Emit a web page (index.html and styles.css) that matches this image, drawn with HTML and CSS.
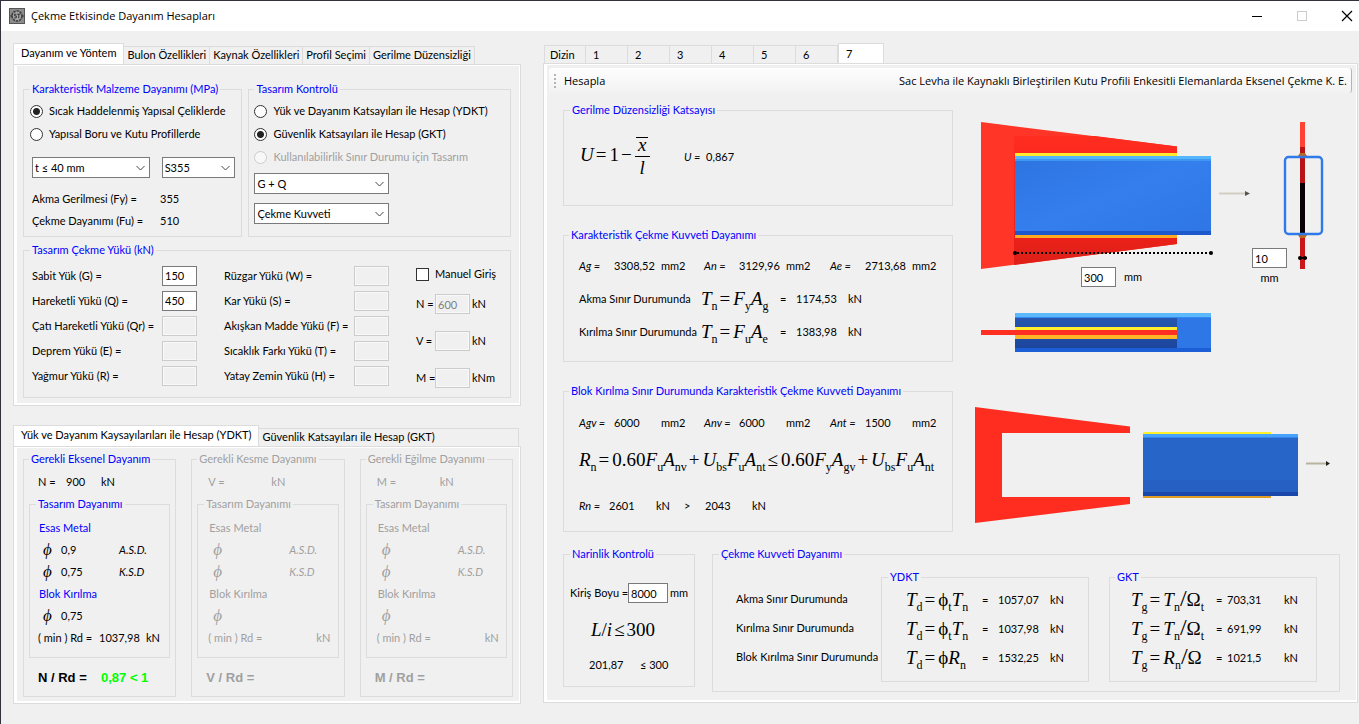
FILE: index.html
```
<!DOCTYPE html>
<html lang="tr">
<head>
<meta charset="utf-8">
<title>Çekme Etkisinde Dayanım Hesapları</title>
<link rel="stylesheet" href="styles.css">
</head>
<body>
<div class="window">
  <header class="titlebar">
    <svg class="app-icon" width="16" height="16" viewBox="0 0 16 16" aria-hidden="true">
      <rect x="0.5" y="0.5" width="15" height="15" fill="#8c8c8c" stroke="#555"/>
      <circle cx="8" cy="8" r="5" fill="#a9a9a9" stroke="#3f3f3f" stroke-width="1.6" stroke-dasharray="2.4 .8"/>
      <path d="M1.5 8h2M12.5 8h2" stroke="#444" stroke-width="2"/>
      <path d="M7.4 6.2H5.6v1.7h1.7v2H5.2M8.2 6.2h3.2M9.8 6.2v4" fill="none" stroke="#333"/>
    </svg>
    <h1 class="title">Çekme Etkisinde Dayanım Hesapları</h1>
    <div class="window-buttons">
      <button class="win-btn" aria-label="Simge durumuna küçült"><svg width="12" height="12" viewBox="0 0 12 12"><path d="M1 6.5h10" stroke="#000"/></svg></button>
      <button class="win-btn" aria-label="Ekranı kapla" disabled><svg width="12" height="12" viewBox="0 0 12 12"><rect x="1.5" y="1.5" width="9" height="9" fill="none" stroke="#ccc"/></svg></button>
      <button class="win-btn" aria-label="Kapat"><svg width="12" height="12" viewBox="0 0 12 12"><path d="M1 1l10 10M11 1L1 11" stroke="#000" stroke-width="1.2"/></svg></button>
    </div>
  </header>

  <main class="workspace">
    <div class="side">
      <section>
        <div class="tabs" role="tablist">
          <button class="tab active" role="tab" aria-selected="true">Dayanım ve Yöntem</button>
          <button class="tab" role="tab">Bulon Özellikleri</button>
          <button class="tab" role="tab">Kaynak Özellikleri</button>
          <button class="tab" role="tab">Profil Seçimi</button>
          <button class="tab" role="tab">Gerilme Düzensizliği</button>
        </div>
        <div class="panel method-panel">
          <fieldset class="group material">
            <legend>Karakteristik Malzeme Dayanımı (MPa)</legend>
            <label class="choice"><input type="radio" name="mat" checked>Sıcak Haddelenmiş Yapısal Çeliklerde</label>
            <label class="choice"><input type="radio" name="mat">Yapısal Boru ve Kutu Profillerde</label>
            <div class="selects">
              <select aria-label="Kalınlık"><option>t ≤ 40 mm</option></select>
              <select aria-label="Çelik sınıfı"><option>S355</option></select>
            </div>
            <div class="pair"><span>Akma Gerilmesi (Fy) =</span><output>355</output></div>
            <div class="pair"><span>Çekme Dayanımı (Fu) =</span><output>510</output></div>
          </fieldset>
          <fieldset class="group control">
            <legend>Tasarım Kontrolü</legend>
            <label class="choice"><input type="radio" name="ctl">Yük ve Dayanım Katsayıları ile Hesap (YDKT)</label>
            <label class="choice"><input type="radio" name="ctl" checked>Güvenlik Katsayıları ile Hesap (GKT)</label>
            <label class="choice off"><input type="radio" name="ctl" disabled>Kullanılabilirlik Sınır Durumu için Tasarım</label>
            <select aria-label="Yük birleşimi"><option>G + Q</option></select>
            <select aria-label="Kuvvet türü"><option>Çekme Kuvveti</option></select>
          </fieldset>
          <fieldset class="group loads">
            <legend>Tasarım Çekme Yükü (kN)</legend>
            <div class="load-list">
              <label for="g">Sabit Yük (G) =</label><input id="g" value="150">
              <label for="q">Hareketli Yükü (Q) =</label><input id="q" value="450">
              <label for="qr">Çatı Hareketli Yükü (Qr) =</label><input id="qr" disabled>
              <label for="e">Deprem Yükü (E) =</label><input id="e" disabled>
              <label for="r">Yağmur Yükü (R) =</label><input id="r" disabled>
            </div>
            <div class="load-list">
              <label for="w">Rüzgar Yükü (W) =</label><input id="w" disabled>
              <label for="s">Kar Yükü (S) =</label><input id="s" disabled>
              <label for="f">Akışkan Madde Yükü (F) =</label><input id="f" disabled>
              <label for="t">Sıcaklık Farkı Yükü (T) =</label><input id="t" disabled>
              <label for="h">Yatay Zemin Yükü (H) =</label><input id="h" disabled>
            </div>
            <div class="manual">
              <label class="check"><input type="checkbox">Manuel Giriş</label>
              <div class="force"><label for="n">N =</label><input id="n" value="600" disabled><span>kN</span></div>
              <div class="force"><label for="v">V =</label><input id="v" disabled><span>kN</span></div>
              <div class="force"><label for="m">M =</label><input id="m" disabled><span>kNm</span></div>
            </div>
          </fieldset>
        </div>
      </section>

      <section>
        <div class="tabs" role="tablist">
          <button class="tab active" role="tab" aria-selected="true">Yük ve Dayanım Kaysayılarıları ile Hesap (YDKT)</button>
          <button class="tab grow" role="tab">Güvenlik Katsayıları ile Hesap (GKT)</button>
        </div>
        <div class="panel strength-panel">
          <fieldset class="group strength">
            <legend>Gerekli Eksenel Dayanım</legend>
            <div class="need"><span>N =</span><output>900</output><span>kN</span></div>
            <fieldset class="group design">
              <legend>Tasarım Dayanımı</legend>
              <h2 class="sub-title">Esas Metal</h2>
              <div class="phi-row"><i class="phi">ϕ</i><span>0,9</span><i>A.S.D.</i></div>
              <div class="phi-row"><i class="phi">ϕ</i><span>0,75</span><i>K.S.D</i></div>
              <h2 class="sub-title">Blok Kırılma</h2>
              <div class="phi-row"><i class="phi">ϕ</i><span>0,75</span></div>
              <div class="min-row"><span>( min ) Rd =</span><output>1037,98</output><span>kN</span></div>
            </fieldset>
            <div class="ratio"><span>N / Rd =</span><output>0,87 &lt; 1</output></div>
          </fieldset>
          <fieldset class="group strength off" disabled>
            <legend>Gerekli Kesme Dayanımı</legend>
            <div class="need"><span>V =</span><output></output><span>kN</span></div>
            <fieldset class="group design">
              <legend>Tasarım Dayanımı</legend>
              <h2 class="sub-title">Esas Metal</h2>
              <div class="phi-row"><i class="phi">ϕ</i><span></span><i>A.S.D.</i></div>
              <div class="phi-row"><i class="phi">ϕ</i><span></span><i>K.S.D</i></div>
              <h2 class="sub-title">Blok Kırılma</h2>
              <div class="phi-row"><i class="phi">ϕ</i></div>
              <div class="min-row"><span>( min ) Rd =</span><output></output><span>kN</span></div>
            </fieldset>
            <div class="ratio"><span>V / Rd =</span></div>
          </fieldset>
          <fieldset class="group strength off" disabled>
            <legend>Gerekli Eğilme Dayanımı</legend>
            <div class="need"><span>M =</span><output></output><span>kN</span></div>
            <fieldset class="group design">
              <legend>Tasarım Dayanımı</legend>
              <h2 class="sub-title">Esas Metal</h2>
              <div class="phi-row"><i class="phi">ϕ</i><span></span><i>A.S.D.</i></div>
              <div class="phi-row"><i class="phi">ϕ</i><span></span><i>K.S.D</i></div>
              <h2 class="sub-title">Blok Kırılma</h2>
              <div class="phi-row"><i class="phi">ϕ</i></div>
              <div class="min-row"><span>( min ) Rd =</span><output></output><span>kN</span></div>
            </fieldset>
            <div class="ratio"><span>M / Rd =</span></div>
          </fieldset>
        </div>
      </section>
    </div>

    <section class="results">
      <div class="tabs page-tabs" role="tablist">
        <button class="tab" role="tab">Dizin</button>
        <button class="tab" role="tab">1</button>
        <button class="tab" role="tab">2</button>
        <button class="tab" role="tab">3</button>
        <button class="tab" role="tab">4</button>
        <button class="tab" role="tab">5</button>
        <button class="tab" role="tab">6</button>
        <button class="tab active" role="tab" aria-selected="true">7</button>
      </div>
      <div class="panel results-panel">
        <div class="toolbar">
          <span class="grip"></span>
          <button class="tool">Hesapla</button>
          <span class="caption">Sac Levha ile Kaynaklı Birleştirilen Kutu Profili Enkesitli Elemanlarda Eksenel Çekme K. E.</span>
        </div>
        <div class="sheet">
          <div class="checks">
            <fieldset class="group irregularity">
              <legend>Gerilme Düzensizliği Katsayısı</legend>
              <div class="math"><i>U</i><span class="op">=</span>1<span class="op">−</span><span class="frac"><i><span class="bar">x</span></i><i class="den">l</i></span></div>
              <div class="u-value"><i>U =</i><output>0,867</output></div>
            </fieldset>
            <fieldset class="group characteristic">
              <legend>Karakteristik Çekme Kuvveti Dayanımı</legend>
              <div class="areas"><i>Ag =</i><output>3308,52</output><span>mm2</span><i>An =</i><output>3129,96</output><span>mm2</span><i>Ae =</i><output>2713,68</output><span>mm2</span></div>
              <div class="state"><span>Akma Sınır Durumunda</span><span class="math"><i>T</i><sub>n</sub><span class="op">=</span><i>F</i><sub>y</sub><i>A</i><sub>g</sub></span><span>=</span><output>1174,53</output><span>kN</span></div>
              <div class="state"><span>Kırılma Sınır Durumunda</span><span class="math"><i>T</i><sub>n</sub><span class="op">=</span><i>F</i><sub>u</sub><i>A</i><sub>e</sub></span><span>=</span><output>1383,98</output><span>kN</span></div>
            </fieldset>
            <fieldset class="group block">
              <legend>Blok Kırılma Sınır Durumunda Karakteristik Çekme Kuvveti Dayanımı</legend>
              <div class="areas"><i>Agv =</i><output>6000</output><span>mm2</span><i>Anv =</i><output>6000</output><span>mm2</span><i>Ant =</i><output>1500</output><span>mm2</span></div>
              <div class="math"><i>R</i><sub>n</sub><span class="op">=</span>0.60<i>F</i><sub>u</sub><i>A</i><sub>nv</sub><span class="op">+</span><i>U</i><sub>bs</sub><i>F</i><sub>u</sub><i>A</i><sub>nt</sub><span class="op">≤</span>0.60<i>F</i><sub>y</sub><i>A</i><sub>gv</sub><span class="op">+</span><i>U</i><sub>bs</sub><i>F</i><sub>u</sub><i>A</i><sub>nt</sub></div>
              <div class="compare"><i>Rn =</i><output>2601</output><span>kN</span><span>&gt;</span><output>2043</output><span>kN</span></div>
            </fieldset>
          </div>

          <div class="drawings">
            <div class="section-view">
              <svg width="350" height="232" viewBox="975 121 350 232" role="img" aria-label="Birleşim görünüşleri">
                <defs>
                  <linearGradient id="plate" x1="0" x2="0" y1="0" y2="1"><stop offset="0" stop-color="#ff2c20"/><stop offset=".7" stop-color="#f02218"/><stop offset="1" stop-color="#dd1f18"/></linearGradient>
                  <linearGradient id="tube" x1="0" x2="1" y1="0" y2="1"><stop offset="0" stop-color="#2d74e0"/><stop offset=".5" stop-color="#347eee"/><stop offset="1" stop-color="#2e76e4"/></linearGradient>
                  <linearGradient id="under" x1="0" x2="0" y1="0" y2="1"><stop offset="0" stop-color="#2656ae"/><stop offset="1" stop-color="#1c459c"/></linearGradient>
                </defs>
                <path d="M981 122L1177 146.500V244L981 269z" fill="#ff3527"/>
                <path d="M1014 136V265L1177 244V146.500L1095 136z" fill="url(#plate)"/>
                <path d="M1015 153h162v4h-162z" fill="#ffea2e"/>
                <path d="M1015 234h162v4h-162z" fill="#ffaa20"/>
                <path d="M1015 156h196v79h-196z" fill="url(#tube)"/>
                <path d="M1015 156h196v3h-196z" fill="#55b6fb"/><path d="M1015 159h196v2h-196z" fill="#3f97f4"/>
                <path d="M1015 231h196v4h-196z" fill="#1c57cc"/>
                <path d="M1017 253h194" stroke="#000" stroke-width="2" stroke-dasharray="2 2"/>
                <circle cx="1015" cy="253" r="2"/><circle cx="1211" cy="253" r="2"/>
                <path d="M1219 193.500h27" stroke="#d0cec2" stroke-width="2"/><path d="M1245 191l5 2.500-5 2.500z" fill="#555"/>

                <path d="M1015 313h196v39h-196z" fill="#2d78e6"/>
                <path d="M1015 313h196v4h-196z" fill="#5bb8fb"/><path d="M1015 317h196v1h-196z" fill="#3389f0"/>
                <path d="M1015 318h162v30h-162z" fill="url(#under)"/>
                <path d="M1015 348h196v4h-196z" fill="#1c5ed6"/>
                <path d="M1015 327h162v4h-162z" fill="#ffed2e"/><path d="M1015 335h162v4h-162z" fill="#ffb426"/>
                <path d="M981 330h196v5h-196z" fill="#ff2f22"/>

                <path d="M1300 122h5v25h-5z" fill="#ff4234"/><path d="M1300 147h5v36h-5z" fill="#b81418"/>
                <path d="M1300 183h5v50h-5z" fill="#080006"/><path d="M1300 233h5v36h-5z" fill="#c9171a"/>
                <path d="M1298 156l2-3h5l2 3zM1298 235l2 3h5l2-3z" fill="#b66a22"/>
                <rect x="1285" y="157" width="37" height="77" rx="3.500" fill="none" stroke="#2f7ae8" stroke-width="2.400"/>
                <path d="M1299 258h8" stroke="#000" stroke-width="2"/><circle cx="1300" cy="258" r="2"/><circle cx="1305" cy="258" r="2"/>
              </svg>
              <label class="dim dim-length"><input value="300">mm</label>
              <label class="dim dim-thickness"><input value="10">mm</label>
            </div>
            <svg width="356" height="118" viewBox="975 406 356 118" role="img" aria-label="Blok kırılma görünüşü">
              <path d="M975 407L1130 426.500V433H1002V497H1130V504L975 523z" fill="#ff2c20"/>
              <path d="M1143 432h128v4h-128z" fill="#fff028"/><path d="M1143 494h128v4h-128z" fill="#e29c24"/>
              <path d="M1143 434h155v62h-155z" fill="#2865c8"/>
              <path d="M1143 434h155v3h-155z" fill="#46a2fa"/><path d="M1143 437h155v1h-155z" fill="#3484ea"/>
              <path d="M1143 480h155v12h-155z" fill="#2560c2"/><path d="M1143 492h155v4h-155z" fill="#1a48aa"/>
              <path d="M1306 463.500h22" stroke="#b8b29e" stroke-width="2"/><path d="M1326 461l4 2.500-4 2.500z" fill="#222"/>
            </svg>
          </div>

          <fieldset class="group slender">
            <legend>Narinlik Kontrolü</legend>
            <div class="length"><label for="len">Kiriş Boyu =</label><input id="len" value="8000"><span>mm</span></div>
            <div class="math"><i>L</i>/<i>i</i><span class="tight">≤</span>300</div>
            <div class="limit"><output>201,87</output><span>≤ 300</span></div>
          </fieldset>

          <fieldset class="group capacity">
            <legend>Çekme Kuvveti Dayanımı</legend>
            <div class="state-names"><span>Akma Sınır Durumunda</span><span>Kırılma Sınır Durumunda</span><span>Blok Kırılma Sınır Durumunda</span></div>
            <fieldset class="group ydkt">
              <legend>YDKT</legend>
              <div class="cap-row"><span class="math"><i>T</i><sub>d</sub><span class="op">=</span>ϕ<sub>t</sub><i>T</i><sub>n</sub></span><span>=</span><output>1057,07</output><span>kN</span></div>
              <div class="cap-row"><span class="math"><i>T</i><sub>d</sub><span class="op">=</span>ϕ<sub>t</sub><i>T</i><sub>n</sub></span><span>=</span><output>1037,98</output><span>kN</span></div>
              <div class="cap-row"><span class="math"><i>T</i><sub>d</sub><span class="op">=</span>ϕ<i>R</i><sub>n</sub></span><span>=</span><output>1532,25</output><span>kN</span></div>
            </fieldset>
            <fieldset class="group gkt">
              <legend>GKT</legend>
              <div class="cap-row"><span class="math"><i>T</i><sub>g</sub><span class="op">=</span><i>T</i><sub>n</sub><span class="slash">/</span>Ω<sub>t</sub></span><span>=</span><output>703,31</output><span>kN</span></div>
              <div class="cap-row"><span class="math"><i>T</i><sub>g</sub><span class="op">=</span><i>T</i><sub>n</sub><span class="slash">/</span>Ω<sub>t</sub></span><span>=</span><output>691,99</output><span>kN</span></div>
              <div class="cap-row"><span class="math"><i>T</i><sub>g</sub><span class="op">=</span><i>R</i><sub>n</sub><span class="slash">/</span>Ω</span><span>=</span><output>1021,5</output><span>kN</span></div>
            </fieldset>
          </fieldset>
        </div>
      </div>
    </section>
  </main>
</div>
</body>
</html>
```
FILE: styles.css
```
* { box-sizing: border-box; }

body {
  margin: 0;
  background: #f0f0f0;
  color: #000;
  font: 11px/16px Lato, sans-serif;
}

button, input, select { font: inherit; color: inherit; margin: 0; }

.window {
  min-height: 100vh;
  border: 1px solid #33313e;
  border-right: 0;
}

/* Title bar */
.titlebar {
  display: flex;
  align-items: center;
  height: 30px;
  padding-left: 8px;
  background: #fff;
}
.title {
  flex: 1;
  margin: 0 0 0 6px;
  font: 11px/16px "Open Sans", sans-serif;
}
.window-buttons { display: flex; }
.win-btn {
  display: grid;
  place-items: center;
  width: 45px;
  height: 30px;
  padding: 0;
  border: 0;
  background: none;
}
.win-btn:last-child { width: 24px; margin-left: 11px; }

/* Two-column workspace */
.workspace {
  display: grid;
  grid-template-columns: minmax(508px, 508fr) minmax(815px, 815fr);
  gap: 22px;
  align-items: start;
  padding: 12px 1px 20px 12px;
}
.side { display: grid; gap: 19px; }

/* Tabs */
.tabs { display: flex; align-items: flex-end; height: 21px; }
.tab {
  height: 18px;
  padding: 0 3px 2px;
  border: 1px solid #dcdcdc;
  border-bottom: 0;
  border-left: 0;
  background: #f0f0f0;
  line-height: 14px;
  white-space: nowrap;
  text-align: left;
}
.tab.active {
  height: 21px;
  padding: 0 7px 2px;
  border-left: 1px solid #dcdcdc;
  background: #fff;
}
.tab.grow { flex: 1; margin-right: 2px; }
.page-tabs { padding-left: 1px; height: 20px; }
.page-tabs .tab { width: 42px; padding: 0 0 0 7px; }
.page-tabs .tab:first-child { border-left: 1px solid #dcdcdc; padding-left: 5px; }
.page-tabs .tab.active { width: 46px; height: 20px; }

.panel {
  border: 1px solid #dcdcdc;
  box-shadow: inset 3px 1px #fff, inset -1px -2px #fff;
}

/* Group boxes */
.group {
  min-width: 0;
  margin: 0;
  padding: 0;
  border: 1px solid #dcdcdc;
}
.group > legend {
  margin-left: 6px;
  padding: 0 2px;
  color: #00f;
  line-height: 16px;
  white-space: nowrap;
}
.off, .off .sub-title { color: #a0a0a0; }
.group.off > legend, .off .group > legend { color: #a0a0a0; }

input:not([type]) {
  width: 35px;
  height: 20px;
  padding: 0 2px;
  border: 1px solid #7a7a7a;
  background: #fff;
  border-radius: 0;
}
input:not([type]):disabled {
  border-color: #ccc;
  background: #f0f0f0;
  color: #808080;
  box-shadow: inset 0 0 0 1px #f8f8f8;
}

select {
  appearance: none;
  height: 21px;
  padding: 0 2px;
  border: 1px solid #7a7a7a;
  border-radius: 0;
  background: #fff url("data:image/svg+xml,%3Csvg xmlns='http://www.w3.org/2000/svg' width='9' height='6'%3E%3Cpath d='M.5 1l4 4 4-4' fill='none' stroke='%23444'/%3E%3C/svg%3E") no-repeat right 4px center;
}

input[type="radio"] {
  appearance: none;
  flex: none;
  width: 13px;
  height: 13px;
  border: 1px solid #333;
  border-radius: 50%;
  background: #fff;
}
input[type="radio"]:checked { background: radial-gradient(circle, #222 3px, #fff 4px); }
input[type="radio"]:disabled { border-color: #ccc; background: #f8f8f8; }
input[type="checkbox"] {
  appearance: none;
  flex: none;
  width: 13px;
  height: 13px;
  border: 1px solid #333;
  background: #fff;
}
.choice, .check { display: flex; align-items: center; gap: 6px; white-space: nowrap; }
.choice { height: 22px; margin-bottom: 1px; }

/* Method panel */
.method-panel {
  display: grid;
  grid-template-columns: minmax(0, 219fr) minmax(0, 262fr);
  gap: 5px 6px;
  padding: 16px 9px 7px;
}
.material { padding: 3px 6px 4px; }
.material legend, .control legend { margin-left: 0; }
.selects { display: flex; gap: 12px; margin: 12px 0 10px 2px; }
.selects select:first-child { width: 118px; }
.selects select:last-child { width: 74px; }
.pair { display: grid; grid-template-columns: 128px 1fr; padding-left: 2px; line-height: 22px; white-space: nowrap; }
.control { padding: 3px 5px; }
.control select { display: block; width: 135px; margin-top: 5px; }
.control select + select { margin-top: 9px; }
.loads { grid-column: 1 / -1; display: flex; gap: 27px; padding: 5px 8px 9px; }
.loads > legend { margin-left: -2px; }
.load-list {
  display: grid;
  grid-template-columns: 130px 35px;
  grid-auto-rows: 25px;
  align-items: center;
  white-space: nowrap;
}
.manual { display: grid; align-content: start; gap: 17px; padding-top: 1px; }
.check { height: 20px; margin-bottom: -7px; }
.force { display: grid; grid-template-columns: 19px 35px auto; align-items: center; white-space: nowrap; }
.force span { padding-left: 2px; }

/* Strength panel */
.strength-panel {
  display: grid;
  grid-template-columns: repeat(3, minmax(0, 1fr));
  gap: 15px;
  padding: 4px 7px 6px 9px;
}
.strength { padding: 5px 5px 8px; }
.strength > legend { margin-left: 0; }
.need, .min-row, .phi-row, .ratio { display: grid; white-space: nowrap; }
.need { grid-template-columns: 28px 35px auto; padding-left: 9px; line-height: 20px; }
.design { margin: 4px 0 10px; padding: 5px 8px 8px; line-height: 22px; }
.design > legend { margin-left: -2px; }
.strength.off .need { padding-left: 11px; }
.strength.off .design { padding-left: 10px; }
.strength.off .design > legend { margin-left: -4px; }
.sub-title { margin: 0 0 0 1px; font: inherit; color: #00f; }
.phi-row { grid-template-columns: 18px 58px auto; padding-left: 5px; height: 22px; }
.phi { font: italic 17px/22px "Liberation Serif", "DejaVu Serif", serif; }
.min-row { grid-template-columns: 61px 47px auto; }
.ratio {
  grid-template-columns: 63px auto;
  padding-left: 9px;
  font: bold 13px/20px "Liberation Sans", sans-serif;
}
.ratio output { color: #0f0; }

/* Results */
.results-panel { padding: 4px 5px 10px; }
.toolbar {
  display: flex;
  align-items: center;
  height: 25px;
  padding: 0 4px 0 5px;
  border-right: 1px solid #b4b4b4;
  border-radius: 3px;
  background: linear-gradient(#fdfdfd, #f2f2f2);
  font: 11px/16px "Open Sans", sans-serif;
}
.grip {
  width: 2px;
  height: 14px;
  background: repeating-linear-gradient(#b4b4b4 0 2px, transparent 2px 4px);
}
.tool { margin-right: auto; padding: 0 8px; border: 0; background: none; }
.sheet {
  display: grid;
  grid-template-columns: 132px 258px 1fr;
  padding: 9px 12px 0 14px;
  row-gap: 14px;
}
.checks { grid-column: 1 / 3; display: grid; gap: 21px; }
.irregularity { display: flex; align-items: center; height: 104px; padding: 0 16px 10px; }
.irregularity .math { width: 104px; }
.checks .group > legend { margin-left: -10px; }
.u-value { display: grid; grid-template-columns: 22px auto; }
.characteristic { height: 135px; padding: 6px 15px; }
.areas {
  display: grid;
  grid-template-columns: 35px 47px 43px 35px 47px 44px 35px 47px auto;
  line-height: 33px;
}
.state { display: grid; grid-template-columns: 122px 79px 16px 52px auto; line-height: 33px; white-space: nowrap; }
.block { height: 149px; padding: 7px 15px 0; }
.block > .math { line-height: 42px; }
.compare { display: grid; grid-template-columns: 30px 47px 28px 21px 47px auto; line-height: 50px; }

/* Formulas */
.math { font-family: "Liberation Serif", serif; font-size: 19px; white-space: nowrap; }
.math sub { font-size: 12px; line-height: 0; vertical-align: -5px; }
.op { margin: 0 3px 0 2px; }
.tight { margin: 0 2px; }
.slash { font-size: 24px; line-height: 0; }
.frac { display: inline-grid; vertical-align: middle; text-align: center; line-height: 22px; width: 15px; }
.bar { display: inline-block; border-top: 1px solid #000; padding: 0 2px; line-height: 14px; }
.den { border-top: 1px solid #000; }

/* Drawings */
.drawings {
  display: flex;
  flex-direction: column;
  gap: 53px;
  padding: 19px 0 0 22px;
}
.drawings svg { display: block; }
.section-view { position: relative; width: 350px; }
.dim { position: absolute; display: flex; align-items: center; }
.dim-length { left: 106px; top: 146px; gap: 8px; }
.dim-thickness { left: 277px; top: 127px; flex-direction: column; gap: 2px; }

/* Bottom groups */
.slender { align-self: start; padding: 21px 6px 13px; }
.slender > legend { margin-left: 0; }
.length { display: grid; grid-template-columns: 58px 42px auto; align-items: center; white-space: nowrap; }
.length input:not([type]) { width: 40px; }
.slender .math { padding-left: 21px; line-height: 54px; }
.limit { display: grid; grid-template-columns: 51px auto; padding-left: 19px; }
.capacity {
  grid-column: 2 / 4;
  display: grid;
  grid-template-columns: 145px 208px 208px;
  margin-left: 17px;
  padding: 7px 20px 9px 23px;
}
.capacity > legend { margin-left: -17px; }
.state-names { display: grid; grid-auto-rows: 29px; align-items: center; padding-top: 15px; white-space: nowrap; }
.ydkt { padding: 0 0 9px 24px; }
.gkt { margin-left: 20px; margin-right: -20px; padding: 0 0 9px 21px; }
.ydkt > legend { margin-left: -18px; }
.gkt > legend { margin-left: -16px; }
.cap-row { display: grid; line-height: 29px; height: 29px; white-space: nowrap; }
.ydkt .cap-row { grid-template-columns: 76px 16px 52px auto; }
.gkt .cap-row { grid-template-columns: 85px 11px 57px auto; }
```
